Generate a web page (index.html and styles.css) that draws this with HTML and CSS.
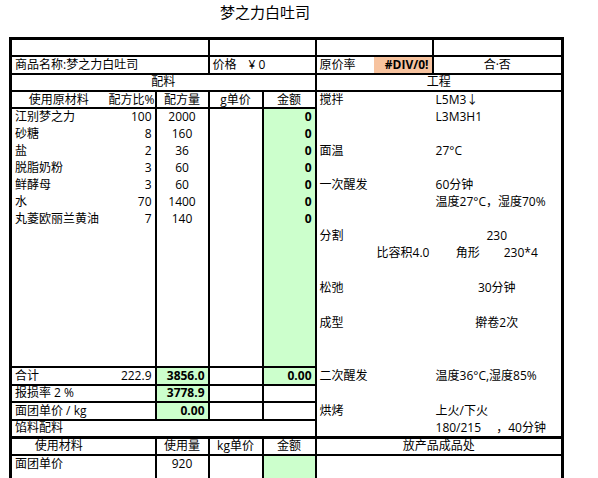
FILE: index.html
```html
<!DOCTYPE html>
<html lang="zh">
<head>
<meta charset="utf-8">
<title>梦之力白吐司</title>
<link rel="stylesheet" href="styles.css">
</head>
<body>
<div class="title">梦之力白吐司</div>
<table class="sheet">
  <colgroup>
    <col class="ca"><col class="cb"><col class="cc"><col class="cd"><col class="ce"><col class="cf1"><col class="cf2"><col class="cg">
  </colgroup>
  <tr class="r175 hl">
    <td colspan="3" class="br"></td>
    <td colspan="2" class="br"></td>
    <td colspan="2" class="br"></td>
    <td></td>
  </tr>
  <tr class="r175 hl">
    <td colspan="3" class="br">商品名称:梦之力白吐司</td>
    <td colspan="2" class="br">价格　¥ 0</td>
    <td>原价率</td>
    <td class="o r b br">#DIV/0!</td>
    <td class="c">合·否</td>
  </tr>
  <tr class="r175 hl">
    <td colspan="5" class="c br">配料</td>
    <td colspan="3" class="c">工程</td>
  </tr>
  <tr class="r17">
    <td class="c bb">使用原材料</td>
    <td class="r bb br tight">配方比%</td>
    <td class="c bb br">配方量</td>
    <td class="c bb br">g单价</td>
    <td class="c bb br">金额</td>
    <td colspan="2">搅拌</td>
    <td>L5M3↓</td>
  </tr>
  <tr class="r17">
    <td>江别梦之力</td><td class="r br">100</td><td class="c br">2000</td><td class="br"></td><td class="g r b br">0</td>
    <td colspan="2"></td><td>L3M3H1</td>
  </tr>
  <tr class="r17">
    <td>砂糖</td><td class="r br">8</td><td class="c br">160</td><td class="br"></td><td class="g r b br">0</td>
    <td colspan="2"></td><td></td>
  </tr>
  <tr class="r17">
    <td>盐</td><td class="r br">2</td><td class="c br">36</td><td class="br"></td><td class="g r b br">0</td>
    <td colspan="2">面温</td><td>27°C</td>
  </tr>
  <tr class="r17">
    <td>脱脂奶粉</td><td class="r br">3</td><td class="c br">60</td><td class="br"></td><td class="g r b br">0</td>
    <td colspan="2"></td><td></td>
  </tr>
  <tr class="r17">
    <td>鲜酵母</td><td class="r br">3</td><td class="c br">60</td><td class="br"></td><td class="g r b br">0</td>
    <td colspan="2">一次醒发</td><td>60分钟</td>
  </tr>
  <tr class="r17">
    <td>水</td><td class="r br">70</td><td class="c br">1400</td><td class="br"></td><td class="g r b br">0</td>
    <td colspan="2"></td><td>温度27°C，湿度70%</td>
  </tr>
  <tr class="r17">
    <td>丸菱欧丽兰黄油</td><td class="r br">7</td><td class="c br">140</td><td class="br"></td><td class="g r b br">0</td>
    <td colspan="2"></td><td></td>
  </tr>
  <tr class="r175">
    <td></td><td class="br"></td><td class="br"></td><td class="br"></td><td class="g br"></td>
    <td colspan="2">分割</td><td class="c">230</td>
  </tr>
  <tr class="r175">
    <td></td><td class="br"></td><td class="br"></td><td class="br"></td><td class="g br"></td>
    <td></td><td>比容积4.0</td><td class="c">角形　　230*4</td>
  </tr>
  <tr class="r175">
    <td></td><td class="br"></td><td class="br"></td><td class="br"></td><td class="g br"></td>
    <td colspan="2"></td><td></td>
  </tr>
  <tr class="r175">
    <td></td><td class="br"></td><td class="br"></td><td class="br"></td><td class="g br"></td>
    <td colspan="2">松弛</td><td class="c">30分钟</td>
  </tr>
  <tr class="r175">
    <td></td><td class="br"></td><td class="br"></td><td class="br"></td><td class="g br"></td>
    <td colspan="2"></td><td></td>
  </tr>
  <tr class="r175">
    <td></td><td class="br"></td><td class="br"></td><td class="br"></td><td class="g br"></td>
    <td colspan="2">成型</td><td class="c">擀卷2次</td>
  </tr>
  <tr class="r175">
    <td></td><td class="br"></td><td class="br"></td><td class="br"></td><td class="g br"></td>
    <td colspan="2"></td><td></td>
  </tr>
  <tr class="r175">
    <td class="bb"></td><td class="bb br"></td><td class="bb br"></td><td class="bb br"></td><td class="g bb br"></td>
    <td colspan="2"></td><td></td>
  </tr>
  <tr class="r175">
    <td class="bb">合计</td><td class="r bb br">222.9</td><td class="g r b bb br">3856.0</td><td class="bb br"></td><td class="g r b bb br">0.00</td>
    <td colspan="2">二次醒发</td><td>温度36°C,湿度85%</td>
  </tr>
  <tr class="r175">
    <td class="bb">报损率 2 %</td><td class="bb br"></td><td class="g r b bb br">3778.9</td><td class="bb br"></td><td class="bb br"></td>
    <td colspan="2"></td><td></td>
  </tr>
  <tr class="r175">
    <td class="bb">面团单价 / kg</td><td class="bb br"></td><td class="g r b bb br">0.00</td><td class="bb br"></td><td class="bb br"></td>
    <td colspan="2">烘烤</td><td>上火/下火</td>
  </tr>
  <tr class="r175 hl3">
    <td colspan="5" class="br">馅料配料</td>
    <td colspan="2"></td><td class="pre">180/215　  ，40分钟</td>
  </tr>
  <tr class="r175 hl">
    <td class="c">使用材料</td><td class="br"></td><td class="c br">使用量</td><td class="c br">kg单价</td><td class="c br">金额</td>
    <td colspan="3" class="c">放产品成品处</td>
  </tr>
  <tr class="r175">
    <td>面团单价</td><td class="br"></td><td class="c br">920</td><td class="br"></td><td class="g br"></td>
    <td colspan="3"></td>
  </tr>
  <tr class="r175">
    <td></td><td class="br"></td><td class="br"></td><td class="br"></td><td class="g br"></td>
    <td colspan="3"></td>
  </tr>
</table>
</body>
</html>
```

FILE: styles.css
```css
html, body {
  margin: 0;
  padding: 0;
  background: #fff;
}

body {
  font-family: "Open Sans", "Noto Sans CJK SC", sans-serif;
  font-size: 12px;
  color: #000;
}

.title {
  width: 530px;
  height: 37px;
  padding-top: 1px;
  box-sizing: border-box;
  text-align: center;
  font-family: "Noto Sans CJK SC", sans-serif;
  font-size: 15px;
  line-height: 22px;
}

.sheet {
  margin-left: 9px;
  border-collapse: collapse;
  table-layout: fixed;
  width: 552px;
  border: 3px solid #000;
}

.ca { width: 95px; }
.cb { width: 50px; }
.cc { width: 53px; }
.cd { width: 54px; }
.ce { width: 53px; }
.cf1 { width: 58px; }
.cf2 { width: 59px; }
.cg { width: 130px; }

.sheet td {
  padding: 0 3px;
  white-space: nowrap;
  overflow: visible;
  line-height: 14px;
  vertical-align: middle;
}

.r17 { height: 17px; }
.r175 { height: 17.5px; }
.r18 { height: 18px; }

.hl > td { border-bottom: 2px solid #000; }
.hl3 > td { border-bottom: 3px solid #000; }
.sheet td.bb { border-bottom: 2px solid #000; }
.sheet td.br { border-right: 2px solid #000; }

.sheet td.tight { padding: 0; }
.c { text-align: center; }
.r { text-align: right; }
.b { font-weight: 700; }
.g { background: #ccffcc; }
.o { background: #f7c39f; }
.pre { white-space: pre; }
```
